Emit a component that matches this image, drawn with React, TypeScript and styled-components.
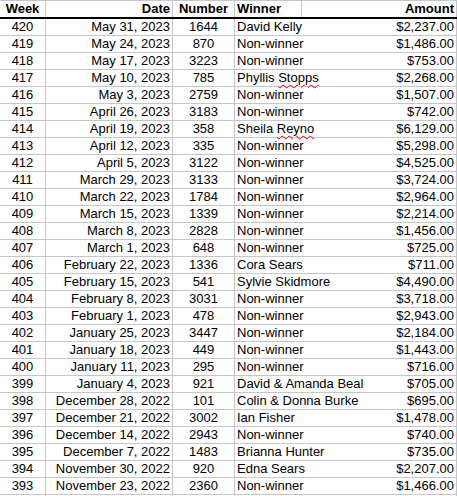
import React from "react";
import styled, { createGlobalStyle } from "styled-components";

const Global = createGlobalStyle`
  html, body { margin: 0; padding: 0; background: #fff; overflow: hidden; }
  body { font-family: "Liberation Sans", Arial, sans-serif; font-size: 13px; color: #000; }
`;

const Sheet = styled.div`
  width: 457px;
  display: flex;
  flex-direction: column;
  border-top: 1px solid #c6c6c6;
`;

const Row = styled.div<{ $header?: boolean }>`
  display: grid;
  grid-template-columns: 46px 127px 62px 67px 155px;
  height: ${(p) => (p.$header ? "18px" : "17px")};
  box-sizing: border-box;
  border-bottom: ${(p) => (p.$header ? "2px solid #000" : "1px solid #c6c6c6")};
  line-height: 16px;
  font-weight: ${(p) => (p.$header ? "bold" : "normal")};
`;

const Cell = styled.div<{ $align: "left" | "right" | "center"; $open?: boolean }>`
  box-sizing: border-box;
  border-right: 1px solid ${(p) => (p.$open ? "transparent" : "#c6c6c6")};
  text-align: ${(p) => p.$align};
  padding: 0 2px 0 2px;
  white-space: nowrap;
  overflow: ${(p) => (p.$open ? "visible" : "hidden")};
  position: relative;
  z-index: ${(p) => (p.$open ? 1 : 0)};
`;

const Squiggle = styled.span`
  text-decoration: underline wavy #e00000;
  text-decoration-thickness: 1px;
  text-underline-offset: 2px;
`;

type R = [number, string, number, string, string];

const rows: R[] = [
  [420, "May 31, 2023", 1644, "David Kelly", "$2,237.00"],
  [419, "May 24, 2023", 870, "Non-winner", "$1,486.00"],
  [418, "May 17, 2023", 3223, "Non-winner", "$753.00"],
  [417, "May 10, 2023", 785, "Phyllis |Stopps", "$2,268.00"],
  [416, "May 3, 2023", 2759, "Non-winner", "$1,507.00"],
  [415, "April 26, 2023", 3183, "Non-winner", "$742.00"],
  [414, "April 19, 2023", 358, "Sheila |Reyno", "$6,129.00"],
  [413, "April 12, 2023", 335, "Non-winner", "$5,298.00"],
  [412, "April 5, 2023", 3122, "Non-winner", "$4,525.00"],
  [411, "March 29, 2023", 3133, "Non-winner", "$3,724.00"],
  [410, "March 22, 2023", 1784, "Non-winner", "$2,964.00"],
  [409, "March 15, 2023", 1339, "Non-winner", "$2,214.00"],
  [408, "March 8, 2023", 2828, "Non-winner", "$1,456.00"],
  [407, "March 1, 2023", 648, "Non-winner", "$725.00"],
  [406, "February 22, 2023", 1336, "Cora Sears", "$711.00"],
  [405, "February 15, 2023", 541, "Sylvie Skidmore", "$4,490.00"],
  [404, "February 8, 2023", 3031, "Non-winner", "$3,718.00"],
  [403, "February 1, 2023", 478, "Non-winner", "$2,943.00"],
  [402, "January 25, 2023", 3447, "Non-winner", "$2,184.00"],
  [401, "January 18, 2023", 449, "Non-winner", "$1,443.00"],
  [400, "January 11, 2023", 295, "Non-winner", "$716.00"],
  [399, "January 4, 2023", 921, "David & Amanda Beal", "$705.00"],
  [398, "December 28, 2022", 101, "Colin & Donna Burke", "$695.00"],
  [397, "December 21, 2022", 3002, "Ian Fisher", "$1,478.00"],
  [396, "December 14, 2022", 2943, "Non-winner", "$740.00"],
  [395, "December 7, 2022", 1483, "Brianna Hunter", "$735.00"],
  [394, "November 30, 2022", 920, "Edna Sears", "$2,207.00"],
  [393, "November 23, 2022", 2360, "Non-winner", "$1,466.00"],
];

function Name({ text }: { text: string }) {
  const i = text.indexOf("|");
  if (i < 0) return <>{text}</>;
  return (
    <>
      {text.slice(0, i)}
      <Squiggle>{text.slice(i + 1)}</Squiggle>
    </>
  );
}

export default function App() {
  return (
    <>
      <Global />
      <Sheet>
        <Row $header>
          <Cell $align="center">Week</Cell>
          <Cell $align="right">Date</Cell>
          <Cell $align="center">Number</Cell>
          <Cell $align="left">Winner</Cell>
          <Cell $align="right">Amount</Cell>
        </Row>
        {rows.map(([w, d, n, name, amt]) => (
          <Row key={w}>
            <Cell $align="center">{w}</Cell>
            <Cell $align="right">{d}</Cell>
            <Cell $align="center">{n}</Cell>
            <Cell $align="left" $open>
              <Name text={name} />
            </Cell>
            <Cell $align="right">{amt}</Cell>
          </Row>
        ))}
        <Row>
          <Cell $align="center" />
          <Cell $align="right" />
          <Cell $align="center" />
          <Cell $align="left" $open />
          <Cell $align="right" />
        </Row>
      </Sheet>
    </>
  );
}
